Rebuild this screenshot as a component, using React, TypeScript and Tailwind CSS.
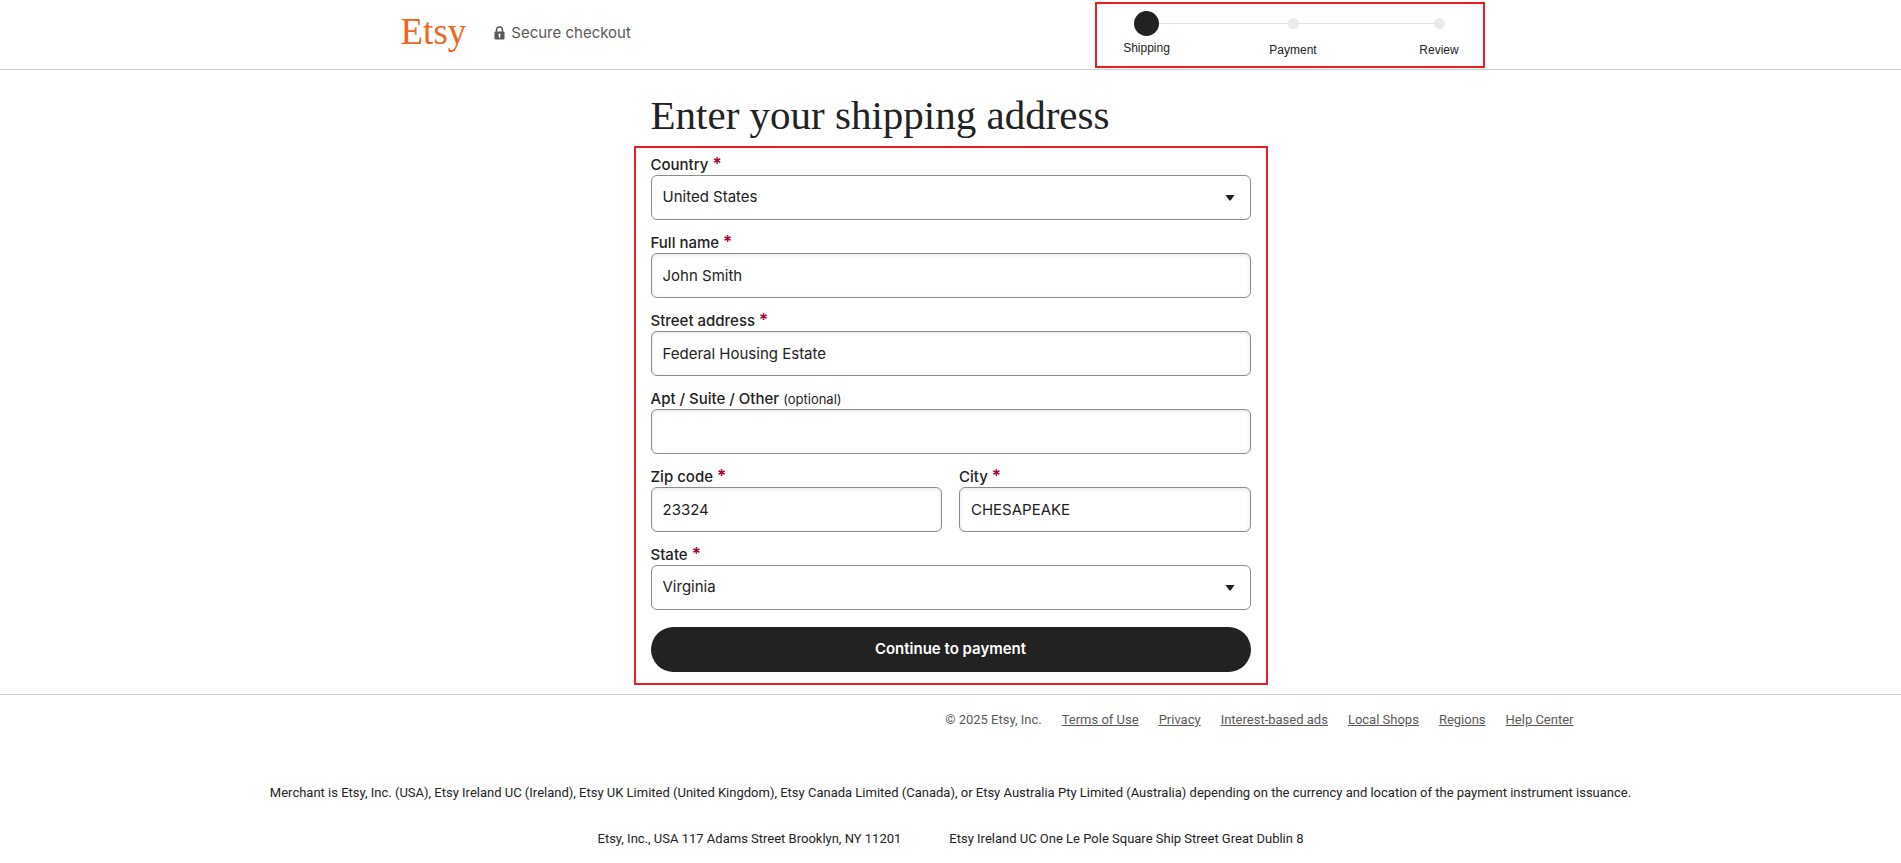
import { useState } from 'react'
import type { ReactNode } from 'react'

const STEPS = [
  { label: 'Shipping', current: true },
  { label: 'Payment', current: false },
  { label: 'Review', current: false },
]

const FOOTER_LINKS = ['Terms of Use', 'Privacy', 'Interest-based ads', 'Local Shops', 'Regions', 'Help Center']

const CONTROL = 'h-[45px] w-full rounded-md border border-[#8c8c8c] bg-white px-[11px] text-[15px] text-[#222222] outline-none focus:border-[#222222]'

function LockIcon() {
  return (
    <svg aria-hidden width="11" height="14" viewBox="0 0 11 14">
      <path d="M2.5 6.5V4a3 3 0 0 1 6 0v2.5" fill="none" stroke="#595959" strokeWidth="1.4" />
      <rect x="0.5" y="5.5" width="10" height="8" rx="1" fill="#595959" />
      <path d="M5.5 7.6a1.1 1.1 0 0 1 .7 1.95V11.7H4.8V9.55a1.1 1.1 0 0 1 .7-1.95Z" fill="#fff" />
    </svg>
  )
}

function Stepper() {
  return (
    <ol className="grid w-[390px] max-w-full grid-cols-[88px_1fr_87px] border-2 border-[#ed1c24] pt-[6px] pb-[9px] pl-[6px] font-['Liberation_Sans',Arial,sans-serif]">
      {STEPS.map(({ label, current }, index) => (
        <li
          key={label}
          aria-current={current ? 'step' : undefined}
          className="flex flex-col items-center text-xs leading-[14px] text-[#222222]"
        >
          <div className="flex h-[26px] w-full items-center">
            <span className={index === 0 ? 'h-px flex-1' : 'h-px flex-1 bg-[#e1e1e1]'} />
            <span className={current ? 'size-[25px] rounded-full bg-[#222222]' : 'size-[11px] rounded-full bg-[#eaeaea]'} />
            <span className={index === STEPS.length - 1 ? 'h-px flex-1' : 'h-px flex-1 bg-[#e1e1e1]'} />
          </div>
          <span className={current ? 'mt-[5px]' : 'mt-[7px]'}>{label}</span>
        </li>
      ))}
    </ol>
  )
}

function Field({ id, label, optional, children }: { id: string; label: string; optional?: boolean; children: ReactNode }) {
  return (
    <div className="min-w-0 flex-1">
      <label htmlFor={id} className="flex h-5 items-baseline gap-1 text-[15px] leading-5 font-medium">
        {label}
        {optional ? <span className="text-[13px] font-normal">(optional)</span> : <span className="text-[17px] leading-none font-semibold text-[#a6002e]">*</span>}
      </label>
      {children}
    </div>
  )
}

function TextField({ id, label, value, optional }: { id: string; label: string; value: string; optional?: boolean }) {
  return (
    <Field id={id} label={label} optional={optional}>
      <input
        id={id}
        type="text"
        defaultValue={value}
        className={`${CONTROL} shadow-[inset_0_1px_4px_rgba(0,0,0,0.1)]`}
      />
    </Field>
  )
}

function SelectField({ id, label, options }: { id: string; label: string; options: string[] }) {
  const [value, setValue] = useState(options[0])
  return (
    <Field id={id} label={label}>
      <div className="relative">
        <select id={id} value={value} onChange={(event) => setValue(event.target.value)} className={`${CONTROL} block appearance-none`}>
          {options.map((option) => <option key={option}>{option}</option>)}
        </select>
        <svg aria-hidden width="10" height="6" viewBox="0 0 10 6" className="pointer-events-none absolute top-5 right-4">
          <path d="M0.5 0h9L5.6 5.6h-1.2Z" fill="#222222" />
        </svg>
      </div>
    </Field>
  )
}

export default function App() {
  return (
    <div className="bg-white font-[Inter,sans-serif] text-[#222222]">
      <header className="border-b border-[#cfcfcf]">
        <div className="mx-auto flex max-w-[1100px] items-start justify-between pt-0.5 pr-4 pb-px">
          <div className="flex items-center">
            <a href="#" className="pt-2 font-['Liberation_Serif',serif] text-[37px] leading-[44px] text-[#f1641e]">Etsy</a>
            <span className="ml-7 flex items-center gap-[6px] pt-2.5 text-[15px] text-[#595959]">
              <LockIcon />
              Secure checkout
            </span>
          </div>
          <Stepper />
        </div>
      </header>

      <main className="mx-auto max-w-[634px]">
        <h1 className="px-[17px] pt-[21px] pb-[7px] font-['Liberation_Serif',serif] text-[41px] leading-[48px]">Enter your shipping address</h1>
        <form
          onSubmit={(event) => event.preventDefault()}
          className="flex flex-col gap-[13px] border-2 border-[#ed1c24] px-[15px] pt-[7px] pb-[11px]"
        >
          <SelectField id="country" label="Country" options={['United States', 'Canada', 'United Kingdom']} />
          <TextField id="name" label="Full name" value="John Smith" />
          <TextField id="street" label="Street address" value="Federal Housing Estate" />
          <TextField id="apt" label="Apt / Suite / Other" value="" optional />
          <div className="flex gap-[17px]">
            <TextField id="zip" label="Zip code" value="23324" />
            <TextField id="city" label="City" value="CHESAPEAKE" />
          </div>
          <SelectField id="state" label="State" options={['Virginia', 'Maryland', 'New York']} />
          <button type="submit" className="mt-1 h-[45px] rounded-full bg-[#222222] text-[15px] font-semibold text-white">
            Continue to payment
          </button>
        </form>
      </main>

      <footer className="mt-[9px] border-t border-[#cfcfcf] font-[Roboto,sans-serif] text-[13px] leading-[18px]">
        <div className="mx-auto flex max-w-[1246px] flex-wrap items-center justify-end gap-x-5 pt-4 text-[#595959]">
          <span>© 2025 Etsy, Inc.</span>
          {FOOTER_LINKS.map((link) => (
            <a key={link} href="#" className="underline">{link}</a>
          ))}
        </div>
        <p className="mt-[55px] text-center">
          Merchant is Etsy, Inc. (USA), Etsy Ireland UC (Ireland), Etsy UK Limited (United Kingdom), Etsy Canada Limited (Canada), or Etsy Australia Pty Limited (Australia) depending on the currency and location of the payment instrument issuance.
        </p>
        <div className="mt-7 flex flex-wrap justify-center gap-x-12 pb-4">
          <span>Etsy, Inc., USA 117 Adams Street Brooklyn, NY 11201</span>
          <span>Etsy Ireland UC One Le Pole Square Ship Street Great Dublin 8</span>
        </div>
      </footer>
    </div>
  )
}
